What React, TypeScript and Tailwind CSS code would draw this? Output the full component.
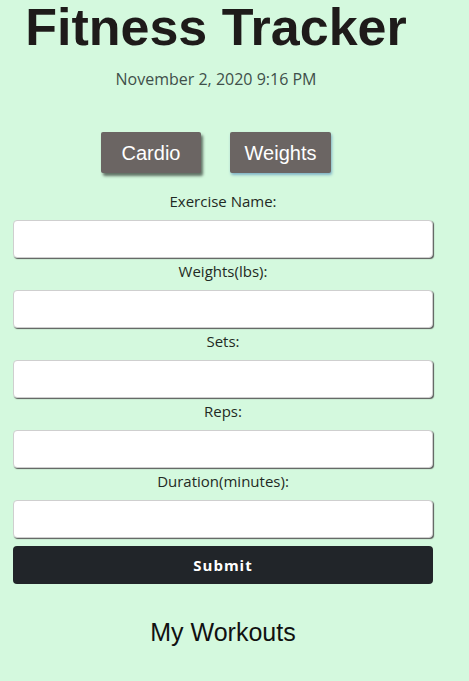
import React from 'react';

const fields = ['Exercise Name:', 'Weights(lbs):', 'Sets:', 'Reps:', 'Duration(minutes):'];

export default function App() {
  return (
    <main className="min-h-screen w-full bg-[#d4f9de] font-['Open_Sans',sans-serif]">
      {/* Header */}
      <div className="w-[432px] flex flex-col items-center">
        <h1 className="m-0 text-[52px] leading-[54px] font-bold text-[#1e1b1a] font-['Liberation_Sans',Arial,sans-serif]">
          Fitness Tracker
        </h1>
        <p className="mt-[15px] text-[16px] leading-[20px] text-[#3f504a]">November 2, 2020 9:16 PM</p>
        <div className="mt-[43px] flex gap-[29px]">
          <button className="w-[100px] h-[41px] rounded-[2px] bg-[#6b6563] text-white text-[20px] font-['Liberation_Sans',Arial,sans-serif] shadow-[2px_3px_3px_rgba(0,0,0,0.55)]">
            Cardio
          </button>
          <button className="w-[101px] h-[41px] rounded-[2px] bg-[#6b6563] text-white text-[20px] font-['Liberation_Sans',Arial,sans-serif] shadow-[1px_2px_3px_#7fb2c6]">
            Weights
          </button>
        </div>
      </div>

      {/* Form */}
      <form className="mt-[17px] w-[420px] ml-[13px] flex flex-col" onSubmit={e => e.preventDefault()}>
        {fields.map((f, i) => (
          <div key={f} className={i === 0 ? 'flex flex-col' : 'mt-[2px] flex flex-col'}>
            <label className="block text-center text-[15px] leading-[22px] mb-[8px] text-[#1f2a24]">{f}</label>
            <input
              type="text"
              className="h-[38px] w-full rounded-[4px] border border-[#cfcfcf] bg-white shadow-[1px_1px_1px_#5a5a5a] outline-none"
            />
          </div>
        ))}
        <button
          type="submit"
          className="mt-[8px] h-[38px] w-full rounded-[4px] bg-[#212529] text-white text-[15px] font-bold tracking-[1px]"
        >
          Submit
        </button>
      </form>

      <h2 className="mt-[33px] w-[420px] ml-[13px] text-center text-[25px] leading-[30px] text-[#111] font-['Liberation_Sans',Arial,sans-serif]">
        My Workouts
      </h2>
    </main>
  );
}
